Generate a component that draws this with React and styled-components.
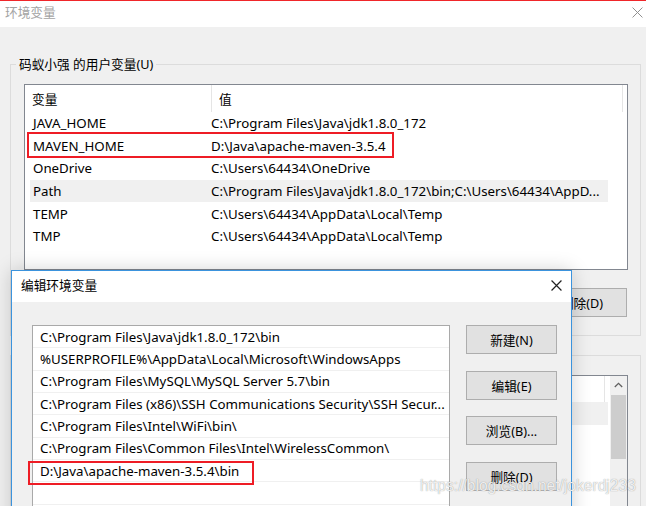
import React from 'react';
import styled, { createGlobalStyle } from 'styled-components';

const GlobalStyle = createGlobalStyle`
  html, body {
    margin: 0;
    padding: 0;
    background: #f0f0f0;
  }
  body {
    font-family: "Noto Sans", "Noto Sans CJK SC", sans-serif;
    font-size: 13.3px;
    color: #000;
  }
`;

const Screen = styled.div`
  position: relative;
  width: 646px;
  height: 506px;
  overflow: hidden;
  background: #f0f0f0;
`;

const RedLine = styled.div`
  height: 1px;
  background: #f0262a;
`;

const TitleBar = styled.div`
  height: ${p => p.$h}px;
  background: #fff;
  display: flex;
  align-items: center;
  justify-content: space-between;
  padding: ${p => p.$pad};
  box-sizing: border-box;
`;

const TitleText = styled.span`
  color: ${p => p.$dim ? '#a3a3a3' : '#000'};
  font-size: 12.7px;
  line-height: 16px;
`;

const Body = styled.div`
  display: flex;
  flex-direction: column;
  gap: 19px;
  padding: 37px 5px 0 10px;
`;

const GroupBox = styled.div`
  position: relative;
  border: 1px solid #dcdcdc;
  padding: 19px 12px 18px 13px;
`;

const GroupLabel = styled.span`
  position: absolute;
  top: -10px;
  left: 5px;
  padding: 0 3px;
  font-size: 12.7px;
  line-height: 18px;
  background: #f0f0f0;
`;

const ListView = styled.div`
  position: relative;
  border: 1px solid #828790;
  background: #fff;
  height: ${p => p.$h}px;
  box-sizing: border-box;
  overflow: hidden;
  display: grid;
  grid-template-columns: ${p => p.$scroll ? '1fr 17px' : '1fr'};
`;

const ListInner = styled.div`
  min-width: 0;
`;

const Header = styled.div`
  display: flex;
  height: ${p => p.$h}px;
  font-size: 12.7px;
`;

const HeaderCell = styled.div`
  width: ${p => p.$w ? `${p.$w}px` : 'auto'};
  flex: ${p => p.$w ? 'none' : '1'};
  border-right: ${p => p.$w ? '1px solid #e5e5e5' : 'none'};
  padding-left: 7px;
  display: flex;
  align-items: center;
`;

const Row = styled.div`
  position: relative;
  display: flex;
  align-items: center;
  height: 22.6px;
  margin-left: 5px;
  width: 578px;
  background: ${p => p.$selected ? '#f0f0f0' : 'transparent'};
  white-space: nowrap;
`;

const NameCell = styled.div`
  width: 175px;
  padding-left: 3px;
  box-sizing: border-box;
`;

const ValueCell = styled.div`
  flex: 1;
  padding-left: 6px;
  overflow: hidden;
`;

const Highlight = styled.div`
  position: absolute;
  left: ${p => p.$x}px;
  top: ${p => p.$y}px;
  width: ${p => p.$w}px;
  height: ${p => p.$h}px;
  border: 2px solid #ee1c25;
  box-sizing: border-box;
  pointer-events: none;
`;

const ButtonRow = styled.div`
  display: flex;
  justify-content: flex-end;
  gap: 8px;
  margin-top: 18px;
  padding-right: 1px;
`;

const Button = styled.button`
  width: ${p => p.$w}px;
  height: 29px;
  background: #e1e1e1;
  border: 1px solid #adadad;
  font: inherit;
  font-size: 12.7px;
  color: #000;
  padding: 0;
`;

const ScrollBar = styled.div`
  background: #f0f0f0;
  display: flex;
  flex-direction: column;
  align-items: center;
`;

const ScrollArrow = styled.div`
  height: 17px;
  display: flex;
  align-items: center;
  justify-content: center;
`;

const ScrollThumb = styled.div`
  width: 15px;
  height: 64px;
  margin-top: 2px;
  background: #cdcdcd;
`;

const Dialog = styled.div`
  position: absolute;
  left: 11px;
  top: 270px;
  width: 561px;
  height: 260px;
  box-sizing: border-box;
  border: 1px solid #3b93dd;
  background: #f0f0f0;
  box-shadow: 0 0 18px rgba(0, 0, 0, 0.18);
`;

const DialogBody = styled.div`
  display: flex;
  gap: 16px;
  padding: 23px 14px 0 20px;
`;

const PathList = styled.div`
  width: 418px;
  height: 240px;
  box-sizing: border-box;
  border: 1px solid #a9a9a9;
  background: #fff;
`;

const PathRow = styled.div`
  position: relative;
  height: 22.33px;
  box-sizing: border-box;
  border-bottom: 1px solid #f0f0f0;
  padding-left: 7px;
  display: flex;
  align-items: center;
  white-space: nowrap;
`;

const ButtonColumn = styled.div`
  display: flex;
  flex-direction: column;
  gap: 16.67px;
`;

const Watermark = styled.div`
  position: absolute;
  left: 420px;
  top: 477px;
  font-family: "Liberation Sans", Arial, sans-serif;
  font-size: 15.6px;
  color: rgba(255, 255, 255, 0.85);
  text-shadow: 0 0 1px rgba(110, 110, 110, 0.8);
  white-space: nowrap;
`;

function CloseIcon({ color, size, width }) {
  return (
    <svg width={size} height={size} viewBox="0 0 10 10">
      <path d="M0.5 0.5 L9.5 9.5 M9.5 0.5 L0.5 9.5" stroke={color} strokeWidth={width} fill="none" />
    </svg>
  );
}

const userVars = [
  ['JAVA_HOME', 'C:\\Program Files\\Java\\jdk1.8.0_172'],
  ['MAVEN_HOME', 'D:\\Java\\apache-maven-3.5.4'],
  ['OneDrive', 'C:\\Users\\64434\\OneDrive'],
  ['Path', 'C:\\Program Files\\Java\\jdk1.8.0_172\\bin;C:\\Users\\64434\\AppD...'],
  ['TEMP', 'C:\\Users\\64434\\AppData\\Local\\Temp'],
  ['TMP', 'C:\\Users\\64434\\AppData\\Local\\Temp'],
];

// system variable rows sit behind the edit dialog; only the selection shows
const sysRows = [true, false, false, false];

const paths = [
  'C:\\Program Files\\Java\\jdk1.8.0_172\\bin',
  '%USERPROFILE%\\AppData\\Local\\Microsoft\\WindowsApps',
  'C:\\Program Files\\MySQL\\MySQL Server 5.7\\bin',
  'C:\\Program Files (x86)\\SSH Communications Security\\SSH Secur...',
  'C:\\Program Files\\Intel\\WiFi\\bin\\',
  'C:\\Program Files\\Common Files\\Intel\\WirelessCommon\\',
  'D:\\Java\\apache-maven-3.5.4\\bin',
  '',
  '',
];

const MAVEN_BIN = 'D:\\Java\\apache-maven-3.5.4\\bin';

export default function App() {
  return (
    <Screen>
      <GlobalStyle />
      <RedLine />
      <TitleBar $h={26} $pad="0 3px 4px 5px">
        <TitleText $dim>环境变量</TitleText>
        <CloseIcon color="#8f8f8f" size={11} width={0.9} />
      </TitleBar>

      <Body>
        <GroupBox>
          <GroupLabel>码蚁小强 的用户变量(U)</GroupLabel>
          <ListView $h={186}>
            <ListInner>
              <Header $h={27}>
                <HeaderCell $w={179}>变量</HeaderCell>
                <HeaderCell $w={403}>值</HeaderCell>
                <HeaderCell />
              </Header>
              {userVars.map(([name, value]) => (
                <Row key={name} $selected={name === 'Path'}>
                  <NameCell>{name}</NameCell>
                  <ValueCell>{value}</ValueCell>
                  {name === 'MAVEN_HOME' && <Highlight $x={-3} $y={-3} $w={367} $h={26} />}
                </Row>
              ))}
            </ListInner>
          </ListView>
          <ButtonRow>
            <Button $w={90}>新建(N)...</Button>
            <Button $w={90}>编辑(E)...</Button>
            <Button $w={90}>删除(D)</Button>
          </ButtonRow>
        </GroupBox>

        <GroupBox>
          <ListView $h={200} $scroll>
            <ListInner>
              <Header $h={26}>
                <HeaderCell $w={179} />
                <HeaderCell $w={385} />
              </Header>
              {sysRows.map((sel, i) => (
                <Row key={i} $selected={sel} />
              ))}
            </ListInner>
            <ScrollBar>
              <ScrollArrow>
                <svg width="9" height="6" viewBox="0 0 9 6">
                  <path d="M0.8 5 L4.5 1.3 L8.2 5" stroke="#606060" strokeWidth="1.3" fill="none" />
                </svg>
              </ScrollArrow>
              <ScrollThumb />
            </ScrollBar>
          </ListView>
        </GroupBox>
      </Body>

      <Dialog>
        <TitleBar $h={31} $pad="0 9px 3px 9px">
          <TitleText>编辑环境变量</TitleText>
          <CloseIcon color="#222" size={11} width={1.1} />
        </TitleBar>
        <DialogBody>
          <PathList>
            {paths.map((p, i) => (
              <PathRow key={i}>
                {p}
                {p === MAVEN_BIN && <Highlight $x={-5} $y={1} $w={226} $h={24} />}
              </PathRow>
            ))}
          </PathList>
          <ButtonColumn>
            <Button $w={91}>新建(N)</Button>
            <Button $w={91}>编辑(E)</Button>
            <Button $w={91}>浏览(B)...</Button>
            <Button $w={91}>删除(D)</Button>
          </ButtonColumn>
        </DialogBody>
      </Dialog>

      <Watermark>https://blog.csdn.net/jokerdj233</Watermark>
    </Screen>
  );
}
